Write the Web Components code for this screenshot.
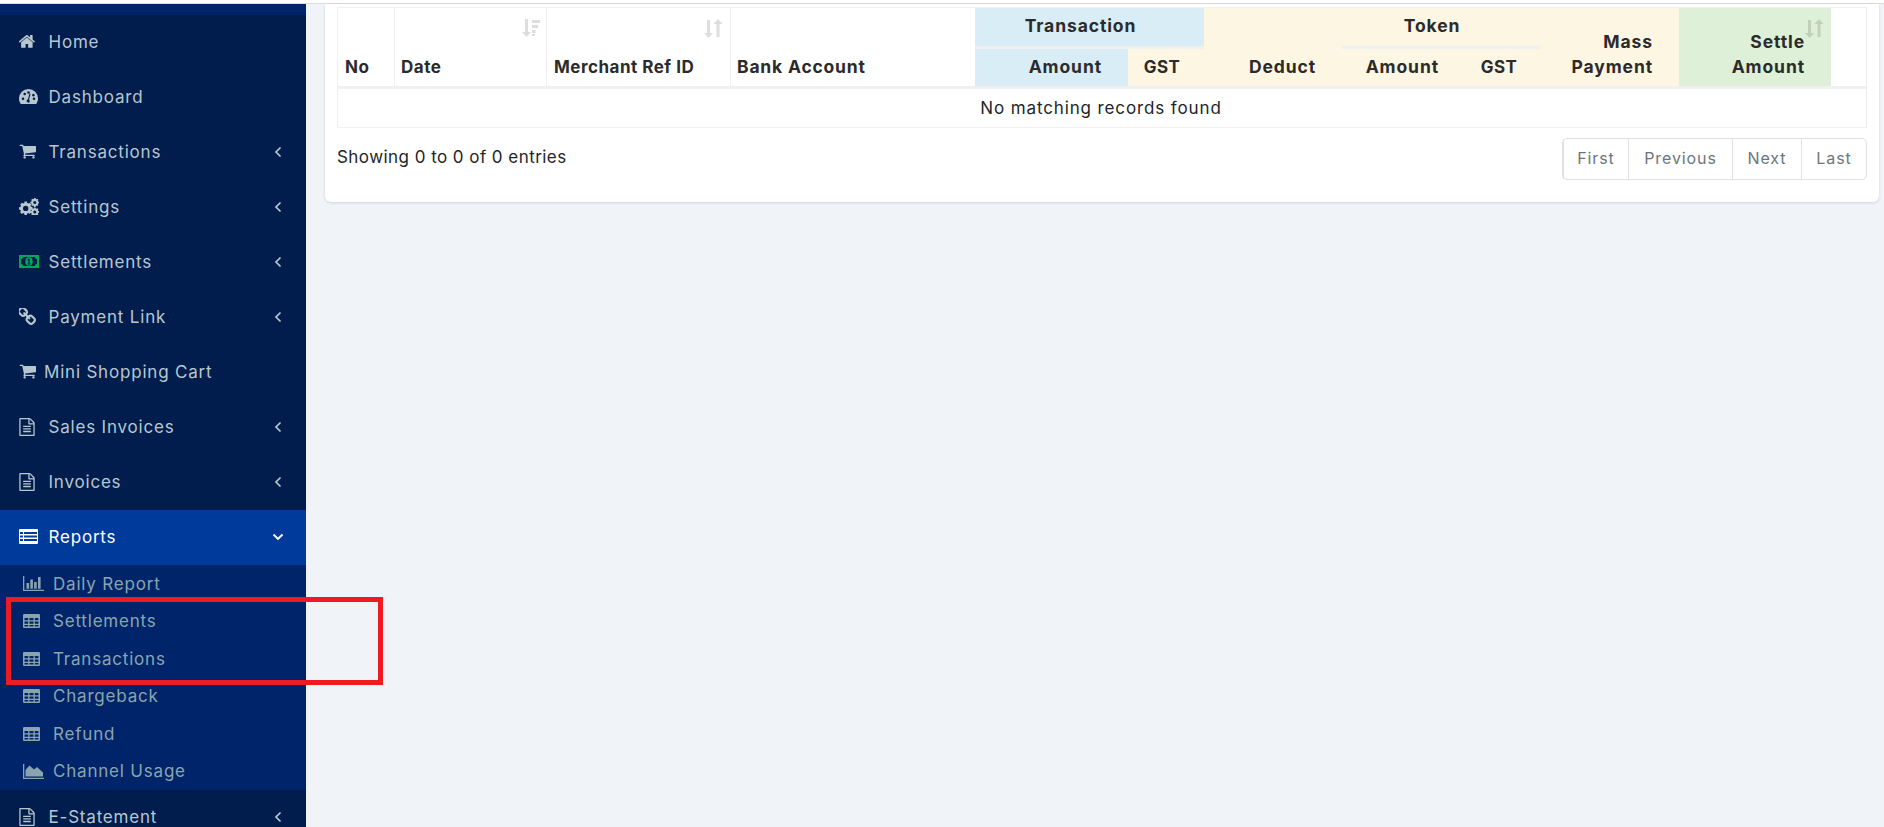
<!DOCTYPE html>
<html><head><meta charset="utf-8"><title>Reports</title>
<style>
html,body{margin:0;height:100%;overflow:hidden;background:#fff}
body{font-family:Inter,"Liberation Sans",sans-serif}
</style></head><body>
<app-shell>
  <side-nav slot="side">
    <nav-item icon="home">Home</nav-item>
    <nav-item icon="dashboard">Dashboard</nav-item>
    <nav-item icon="cart" caret="left">Transactions</nav-item>
    <nav-item icon="cogs" caret="left">Settings</nav-item>
    <nav-item icon="money" caret="left">Settlements</nav-item>
    <nav-item icon="link" caret="left">Payment Link</nav-item>
    <nav-item icon="cart" tight>Mini Shopping Cart</nav-item>
    <nav-item icon="file" caret="left">Sales Invoices</nav-item>
    <nav-item icon="file" caret="left">Invoices</nav-item>
    <nav-item icon="list" caret="down" active>Reports</nav-item>
    <nav-group>
      <nav-item sub icon="bar">Daily Report</nav-item>
      <nav-item sub icon="table">Settlements</nav-item>
      <nav-item sub icon="table">Transactions</nav-item>
      <nav-item sub icon="table">Chargeback</nav-item>
      <nav-item sub icon="table">Refund</nav-item>
      <nav-item sub icon="area">Channel Usage</nav-item>
    </nav-group>
    <nav-item icon="file" caret="left">E-Statement</nav-item>
  </side-nav>
  <report-card slot="main">
    <report-table></report-table>
    <table-footer></table-footer>
  </report-card>
  <mark-box slot="over"></mark-box>
</app-shell>
<script>
const ICONS={
home:'<svg viewBox="0 0 1664 1500" width="17" height="15"><path transform="translate(-64 -150)" d="M1408 992v480q0 26-19 45t-45 19h-384v-384h-256v384h-384q-26 0-45-19t-19-45v-480q0-1 .5-3t.5-3l575-474 575 474q1 2 1 6zm223-69l-62 74q-8 9-21 11h-3q-13 0-21-7l-692-577-692 577q-12 8-24 7-13-2-21-11l-62-74q-8-10-7-23.500t11-21.500l719-599q32-26 76-26t76 26l244 204v-195q0-14 9-23t23-9h192q14 0 23 9t9 23v408l219 182q10 8 11 21.500t-7 23.500z"/></svg>',
dashboard:'<svg viewBox="0 0 19 15" width="19" height="15"><path fill-rule="evenodd" d="M9.500 0A9.500 9.500 0 0 0 0 9.500c0 2 .6 3.800 1.600 5.200.2.200.4.300.7.300h14.400c.3 0 .5-.1.700-.3 1-1.400 1.600-3.200 1.600-5.200A9.500 9.500 0 0 0 9.500 0zM4 11a1.300 1.300 0 1 1 0-2.600A1.300 1.300 0 0 1 4 11zm1.700-4.700a1.300 1.300 0 1 1 0-2.600 1.300 1.300 0 0 1 0 2.600zm3.800-1.500a1.300 1.300 0 1 1 0-2.600 1.300 1.300 0 0 1 0 2.600zm1.700 7.800a1.900 1.900 0 0 1-3.600-1.100c.2-.7.800-1.200 1.400-1.300l1.300-5.200c.1-.4.400-.5.700-.4.300.1.500.4.400.7l-1.300 5.200c.5.400.8 1.300.1 2.100zm2-6.800a1.300 1.300 0 1 1 2.200 1.300 1.300 1.300 0 0 1-2.200-1.300zM15 11a1.300 1.300 0 1 1 0-2.600 1.300 1.300 0 0 1 0 2.600z"/></svg>',
cart:'<svg viewBox="0 200 1728 1480" width="17" height="15"><path d="M704 1536q0 52-38 90t-90 38-90-38-38-90 38-90 90-38 90 38 38 90zm896 0q0 52-38 90t-90 38-90-38-38-90 38-90 90-38 90 38 38 90zm128-1088v512q0 24-16.500 42.500t-40.500 21.500l-1044 122q13 60 13 70 0 16-24 64h920q26 0 45 19t19 45-19 45-45 19h-1024q-26 0-45-19t-19-45q0-11 8-31.500t16-36 21.500-40 15.500-29.500l-177-823h-204q-26 0-45-19t-19-45 19-45 45-19h256q16 0 28.500 6.500t19.500 15.500 13 24.500 8 26 5.500 29.500 4.500 26h1201q26 0 45 19t19 45z"/></svg>',
cogs:'<svg viewBox="0 0 20 17" width="20" height="17"><path fill-rule="evenodd" d="M5.500 3.500h2.400l.3 1.500 1.100.5 1.300-.8 1.700 1.700-.8 1.300.5 1.100 1.500.3v2.400l-1.500.3-.5 1.100.8 1.300-1.700 1.700-1.300-.8-1.100.5-.3 1.500H5.500l-.3-1.500-1.100-.5-1.300.8L1.100 14.300l.8-1.300-.5-1.100L0 11.600V9.200l1.500-.3.500-1.100-.8-1.300 1.700-1.700 1.300.8 1.100-.5zm1.200 4.200a2.700 2.700 0 1 0 0 5.400 2.700 2.700 0 0 0 0-5.400z"/><path fill-rule="evenodd" d="M15 0h1.600l.2 1 .8.300.9-.5.9 1.100-.6.800.3.800 1 .2V5.300l-1 .2-.3.800.6.800-1 1-.9-.5-.7.300-.2 1H15l-.2-1-.8-.3-.8.5-1-1 .5-.8-.3-.8-1-.2V3.700l1-.2.300-.8-.5-.8 1-1.100.8.500.8-.3zm.8 3a1.500 1.500 0 1 0 0 3 1.500 1.500 0 0 0 0-3zM15 9.500h1.600l.2 1 .8.300.9-.5.9 1-.6.900.3.700 1 .2v1.600l-1 .2-.3.800.6.800-1 1-.9-.5-.7.300-.2 1H15l-.2-1-.8-.3-.8.500-1-1 .5-.8-.3-.8-1-.2v-1.600l1-.2.300-.7-.5-.9 1-1 .8.500.8-.3zm.8 3a1.500 1.500 0 1 0 0 3 1.500 1.500 0 0 0 0-3z"/></svg>',
money:'<svg viewBox="0 0 20 13" width="20" height="13"><path fill="#00a65a" fill-rule="evenodd" d="M0 0h20v13H0zM4.200 2C4 3.300 3 4 2 4.200v4.600C3 9 4 9.800 4.200 11h11.600c.2-1.200 1.200-2 2.200-2.200V4.200C17 4 16 3.300 15.800 2z"/><ellipse cx="10" cy="6.500" rx="3.700" ry="4.300" fill="#00a65a"/><path fill="#001d4e" d="M9.300 3.800h1.300v4.700h.8v1H8.600v-1h.8V5.200l-.8.400V4.500z"/></svg>',
link:'<svg viewBox="144 144 1504 1504" width="17" height="17"><path d="M1456 1216q0-40-28-68l-208-208q-28-28-68-28-42 0-72 32 3 3 19 18.500t21.500 21.500 15 19 13 25.500 3.500 27.500q0 40-28 68t-68 28q-15 0-27.500-3.500t-25.500-13-19-15-21.500-21.500-18.500-19q-33 31-33 73 0 40 28 68l206 207q27 27 68 27 40 0 68-26l147-146q28-28 28-67zm-703-705q0-40-28-68l-206-207q-28-28-68-28-39 0-68 27l-147 146q-28 28-28 67 0 40 28 68l208 208q27 27 68 27 42 0 72-31-3-3-19-18.500t-21.500-21.500-15-19-13-25.500-3.500-27.500q0-40 28-68t68-28q15 0 27.500 3.500t25.500 13 19 15 21.500 21.500 18.500 19q33-31 33-73zm895 705q0 120-85 203l-147 146q-83 83-203 83-121 0-204-85l-206-207q-83-83-83-203 0-123 88-209l-88-88q-86 88-208 88-120 0-204-84l-208-208q-84-84-84-204t85-203l147-146q83-83 203-83 121 0 204 85l206 207q83 83 83 203 0 123-88 209l88 88q86-88 208-88 120 0 204 84l208 208q84 84 84 204z"/></svg>',
file:'<svg viewBox="128 0 1536 1792" width="16" height="18"><path d="M1596 380q28 28 48 76t20 88v1152q0 40-28 68t-68 28h-1344q-40 0-68-28t-28-68v-1600q0-40 28-68t68-28h896q40 0 88 20t76 48zm-444-244v376h376q-10-29-22-41l-313-313q-12-12-41-22zm384 1528v-1024h-416q-40 0-68-28t-28-68v-416h-768v1536h1280zm-1024-864q0-14 9-23t23-9h704q14 0 23 9t9 23v64q0 14-9 23t-23 9h-704q-14 0-23-9t-9-23v-64zm736 224q14 0 23 9t9 23v64q0 14-9 23t-23 9h-704q-14 0-23-9t-9-23v-64q0-14 9-23t23-9h704zm0 256q14 0 23 9t9 23v64q0 14-9 23t-23 9h-704q-14 0-23-9t-9-23v-64q0-14 9-23t23-9h704z"/></svg>',
list:'<svg viewBox="0 0 19 15" width="19" height="15"><path fill-rule="evenodd" d="M1 0h17a1 1 0 0 1 1 1v13a1 1 0 0 1-1 1H1a1 1 0 0 1-1-1V1a1 1 0 0 1 1-1zm0 3v2h3V3zm4 0v2h13V3zM1 6.500v2h3v-2zm4 0v2h13v-2zM1 10v2h3v-2zm4 0v2h13v-2z"/></svg>',
bar:'<svg viewBox="0 0 21 15" width="21" height="15"><path d="M0 0h1.300v13.700H21V15H0z"/><rect x="3.500" y="7" width="2.600" height="5.700"/><rect x="7.300" y="3.500" width="2.600" height="9.200"/><rect x="11.100" y="6" width="2.600" height="6.700"/><rect x="15" y="1" width="2.600" height="11.700"/></svg>',
table:'<svg viewBox="0 0 17 14" width="17" height="14"><path fill-rule="evenodd" d="M1.200 0h14.600A1.200 1.200 0 0 1 17 1.200v11.600a1.200 1.200 0 0 1-1.200 1.200H1.200A1.200 1.200 0 0 1 0 12.800V1.200A1.200 1.200 0 0 1 1.200 0zm.3 4v2.300h3.700V4zm5 0v2.300h4V4zm5.300 0v2.300h3.700V4zM1.500 7.500v2.300h3.700V7.500zm5 0v2.300h4V7.500zm5.300 0v2.300h3.700V7.500zM1.500 11v1.600h3.700V11zm5 0v1.600h4V11zm5.300 0v1.600h3.700V11z"/></svg>',
area:'<svg viewBox="0 0 21 15" width="21" height="15"><path d="M0 0h1.300v13.700H21V15H0z"/><path d="M2.500 12.500V6L6.500 1.500l4.500 4 3-2.500 6 5.500v4z"/></svg>'
};
function def(name,html,setup){customElements.define(name,class extends HTMLElement{
  constructor(){super();const s=this.attachShadow({mode:'open'});s.innerHTML=typeof html==='function'?html(this):html;}
  connectedCallback(){if(setup)setup(this)}
});}

def('app-shell',`<style>
:host{display:flex;flex-direction:column;height:827px;width:1884px;position:relative;overflow:hidden;background:#f0f3f8}
.top{height:3px;background:#fff;border-bottom:1px solid #dcdcdc;flex:none}
.row{display:flex;flex:1;min-height:0}
.side{display:block;width:306px;flex:none;overflow:hidden}
.main{flex:1;min-width:0;padding:0 5px 0 19px}
</style><div class="top"></div><div class="row"><div class="side"><slot name="side"></slot></div><div class="main"><slot name="main"></slot></div></div><slot name="over"></slot>`);

def('side-nav',`<style>
:host{display:block;height:823px;background:#001d4e;padding-top:11px;box-sizing:border-box;position:relative;overflow:hidden;
 font:400 17px/24px Inter,"Liberation Sans",sans-serif;letter-spacing:.8px}
.strip{position:absolute;left:0;right:0;top:0;height:11px;background:#00246a}
</style><div class="strip"></div><slot></slot>`);

def('nav-group',`<style>:host{display:block;background:#00246a}</style><slot></slot>`);

def('nav-item',h=>{
 const sub=h.hasAttribute('sub'),act=h.hasAttribute('active'),tight=h.hasAttribute('tight'),c=h.getAttribute('caret');
 const caret=c==='left'?'<svg class="caret" viewBox="0 0 8 12" width="8" height="12"><path d="M6.500 1.500L2 6l4.500 4.500" fill="none" stroke="currentColor" stroke-width="1.700"/></svg>'
  :c==='down'?'<svg class="caret down" viewBox="0 0 12 8" width="12" height="8"><path d="M1.500 1.500L6 6l4.500-4.500" fill="none" stroke="currentColor" stroke-width="1.900"/></svg>':'';
 return `<style>
 :host{display:flex;align-items:center;box-sizing:border-box;height:${sub?'37.5px':'55px'};padding-left:${sub?23:19}px;padding-bottom:${sub?.5:2}px;
  color:${act?'#fff':sub?'#8aa4af':'#b8c7ce'};background:${act?'#003a9b':'transparent'};position:relative}
 .ic{flex:none;width:${sub?30:tight?25:29.500}px;display:flex;align-items:center}
 svg{fill:currentColor;display:block}
 .caret{position:absolute;left:274px;fill:none}
 .down{left:272px}
 </style><span class="ic">${ICONS[h.getAttribute('icon')]}</span><span><slot></slot></span>${caret}`;
});

const sortDesc='<svg viewBox="0 0 20 18" width="20" height="18" fill="#000"><path d="M4 0h3v13h3l-4.500 5L1 13h3z"/><rect x="11" y="1" width="8" height="3"/><rect x="11" y="6" width="6" height="3"/><rect x="11" y="11" width="3.500" height="3"/><rect x="11" y="15" width="3" height="2"/></svg>';
const sortBoth='<svg viewBox="0 0 20 19" width="20" height="19" fill="#000"><path d="M4 1h3v13h3l-4.500 5L1 14h3z"/><path d="M15 0l4.500 5h-3v13h-3V5h-3z"/></svg>';
def('report-table',`<style>
:host{display:block;font:400 17px/24px Inter,"Liberation Sans",sans-serif;color:#212529}
table{border-collapse:separate;border-spacing:0;table-layout:fixed;width:1530px;border:1px solid #f0f0f0;border-right:1px solid #eee;box-sizing:border-box;background:#fff}
th{font-weight:700;box-sizing:border-box;padding:0 7px 6px;vertical-align:bottom;text-align:left;position:relative;line-height:25px;color:#2b2b2b;letter-spacing:.5px;border-bottom:3px solid #f0f0f0}
.b{border-right:1px solid #f0f0f0}
.r{text-align:right}.c{text-align:center}
.w,.r{font-size:17.5px;letter-spacing:.9px;padding-bottom:7px}
.blue{background:#d9edf7}.cream{background:#fdf6e3}.green{background:#dff0d8}
.h1{height:38px;padding:0 18px 4px 0;vertical-align:middle;text-align:center;border-bottom:0}
.h2{height:43px;border-top:3px solid #f0f0f0}
.s{position:absolute;top:11px;right:7px;opacity:.13;line-height:0}
td{height:38px;box-sizing:border-box;text-align:center;padding:0;vertical-align:middle;border:0}
.m{letter-spacing:.88px}
</style>
<table>
<colgroup><col style="width:57px"><col style="width:152px"><col style="width:184px"><col style="width:244px"><col style="width:153px"><col style="width:76px"><col style="width:138px"><col style="width:123px"><col style="width:75px"><col style="width:139px"><col style="width:152px"><col></colgroup>
<thead>
<tr>
<th rowspan="2" class="b">No</th>
<th rowspan="2" class="b" style="padding-left:6px">Date<span class="s" style="right:5px">${sortDesc}</span></th>
<th rowspan="2" class="b">Merchant Ref ID<span class="s">${sortBoth}</span></th>
<th rowspan="2" class="w" style="padding-left:6px;letter-spacing:.8px">Bank Account</th>
<th colspan="2" class="blue w h1">Transaction</th>
<th rowspan="2" class="cream r" style="padding-right:26px">Deduct</th>
<th colspan="2" class="cream w h1">Token</th>
<th rowspan="2" class="cream r" style="padding-right:26px">Mass<br>Payment</th>
<th rowspan="2" class="green r" style="padding-right:26px">Settle<br>Amount<span class="s" style="right:7px">${sortBoth}</span></th>
<th rowspan="2"></th>
</tr>
<tr>
<th class="blue h2 r" style="padding-right:26px">Amount</th>
<th class="cream h2 c" style="padding:0 8px 6px 0">GST</th>
<th class="cream h2 r" style="padding-right:26px">Amount</th>
<th class="cream h2 c" style="padding:0 7px 6px 0">GST</th>
</tr>
</thead>
<tbody><tr><td colspan="12" class="m"><span style="position:relative;left:-1px">No matching records found</span></td></tr></tbody>
</table>`);

def('table-footer',`<style>
:host{display:flex;justify-content:space-between;align-items:flex-start;margin-top:10px;width:1530px;font:400 16px/24px Inter,"Liberation Sans",sans-serif;letter-spacing:.9px;color:#212529}
.info{padding-top:7px;font-size:17px;letter-spacing:.45px}
</style><div class="info">Showing 0 to 0 of 0 entries</div><pager-bar></pager-bar>`);

def('pager-bar',`<style>
:host{display:flex;height:42px;box-sizing:border-box;border:1px solid #dee2e6;border-radius:5px;background:#fff;color:#6c757d;margin-right:0}
span{display:flex;align-items:center;justify-content:center;box-sizing:border-box;border-left:1px solid #dee2e6;padding-bottom:2px}
span:first-child{border-left:0}
</style><span style="width:65px">First</span><span style="width:104px">Previous</span><span style="width:69px">Next</span><span style="width:65px">Last</span>`);

def('report-card',`<style>
:host{display:block;box-sizing:border-box;background:#fff;height:198px;padding:3px 13px 0 12px;border-radius:0 0 6px 6px;box-shadow:0 1px 3px rgba(0,0,0,.14)}
</style><slot></slot>`);

def('mark-box',`<style>
:host{position:absolute;left:6px;top:597px;width:377px;height:88px;box-sizing:border-box;border:5px solid #ed1c24}
</style>`);
</script>
</body></html>
